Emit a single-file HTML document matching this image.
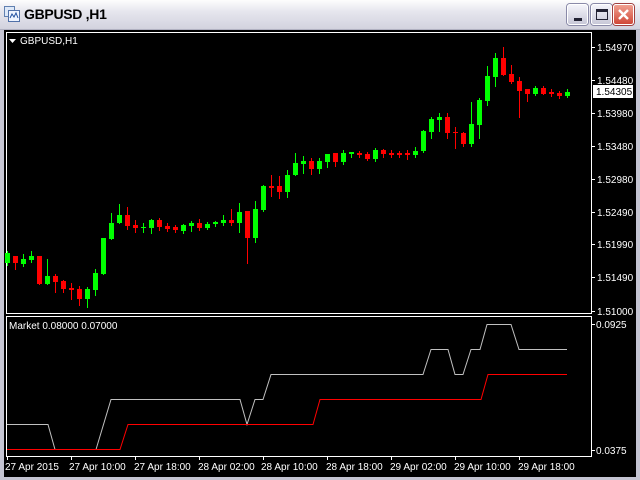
<!DOCTYPE html>
<html><head><meta charset="utf-8"><style>
*{margin:0;padding:0;box-sizing:border-box}
body{width:640px;height:480px;overflow:hidden;background:#c4c4d2;font-family:"Liberation Sans",sans-serif}
#title{position:absolute;left:0;top:0;width:640px;height:30px;background:linear-gradient(#fdfdfd,#e6e6ee 40%,#d2d2de);border-bottom:1px solid #b0b0c0}
#title .t{position:absolute;left:24px;top:6px;font-size:14px;font-weight:bold;color:#000;letter-spacing:-0.3px}
.btn{position:absolute;top:4px;width:21px;height:21px;border:1px solid #fff;border-radius:3px;background:linear-gradient(#f4f4fa,#c8c8d8);box-shadow:0 0 0 1px #8a8aa8}
#frame{position:absolute;left:4px;top:30px;width:632px;height:447px;background:#000}
</style></head><body>
<div id="title">
<svg style="position:absolute;left:4px;top:6px" width="16" height="16"><rect x="0.5" y="0.5" width="10" height="10" fill="#dde8f8" stroke="#6080b0"/><rect x="4.5" y="4.5" width="11" height="11" fill="#eef4ff" stroke="#5070a8"/><path d="M6 12l2-4 2 3 2-4 2 5" stroke="#2050a0" fill="none"/></svg>
<div class="t">GBPUSD ,H1</div>
<div class="btn" style="left:567px"><div style="position:absolute;left:6px;top:13px;width:8px;height:3px;background:#223"></div></div>
<div class="btn" style="left:591px"><div style="position:absolute;left:4px;top:4px;width:12px;height:11px;border:1px solid #223;border-top-width:3px"></div></div>
<div class="btn" style="left:613px;background:linear-gradient(#f0a090,#d04838);box-shadow:0 0 0 1px #a04040"><svg width="19" height="19" style="position:absolute;left:0;top:0"><path d="M5 5L14 14M14 5L5 14" stroke="#fff" stroke-width="2.4"/></svg></div>
</div>
<div id="frame"></div>
<svg id="s" width="640" height="480" style="position:absolute;left:0;top:0" font-family="Liberation Sans, sans-serif" font-size="10"></svg>
<script>
var C=[[253,263,251,265,'g'],[256,263,256,269,'r'],[259,264,254,266,'g'],[256,260,251,262,'g'],[256,284,256,284,'r'],[276,284,259,284,'g'],[276,282,274,292,'r'],[281,289,280,292,'r'],[288,290,283,299,'r'],[289,299,286,305,'r'],[289,299,287,307,'g'],[273,290,269,295,'g'],[238,274,238,274,'g'],[223,239,213,239,'g'],[215,223,204,223,'g'],[215,226,207,229,'r'],[225,228,220,232,'r'],[227,228,223,232,'g'],[220,228,219,233,'g'],[220,227,218,230,'r'],[226,229,223,231,'r'],[227,230,225,232,'r'],[225,231,224,233,'g'],[223,226,221,231,'g'],[223,228,219,230,'r'],[224,228,222,229,'g'],[222,224,221,226,'g'],[220,223,215,225,'g'],[220,223,209,225,'r'],[212,223,203,232,'g'],[211,238,211,263,'r'],[209,238,201,242,'g'],[186,210,185,211,'g'],[186,188,175,196,'r'],[186,192,176,198,'r'],[175,192,170,197,'g'],[163,175,153,175,'g'],[161,164,156,173,'g'],[161,169,158,174,'r'],[161,169,158,173,'g'],[154,162,154,167,'g'],[153,162,153,166,'r'],[153,162,150,164,'g'],[152,154,152,157,'g'],[153,155,151,157,'r'],[154,159,152,160,'r'],[150,159,148,161,'g'],[150,154,149,157,'r'],[153,155,150,157,'r'],[153,155,151,157,'r'],[153,155,150,159,'r'],[151,155,147,157,'g'],[131,151,130,152,'g'],[119,132,117,138,'g'],[117,120,113,131,'g'],[117,133,113,138,'r'],[132,133,127,148,'r'],[133,144,132,146,'r'],[124,144,102,146,'g'],[100,125,98,138,'g'],[76,101,66,105,'g'],[58,77,53,86,'g'],[58,75,47,75,'r'],[74,82,65,83,'r'],[81,91,77,117,'r'],[89,94,89,101,'r'],[88,94,86,95,'g'],[88,94,86,94,'r'],[92,94,89,96,'r'],[93,96,91,98,'r'],[92,96,89,97,'g']];
var h='<rect x="6.5" y="32.5" width="585" height="281" fill="none" stroke="#fff"/><rect x="6.5" y="316.5" width="585" height="140" fill="none" stroke="#fff"/>';
h+='<path d="M9 39h7l-3.5 4z" fill="#fff"/><text x="20" y="44" fill="#fff" font-size="10">GBPUSD,H1</text><text x="9" y="329" fill="#fff">Market 0.08000 0.07000</text>';
C.forEach(function(c,i){var x=7+i*8,col=c[4]=='g'?'#00ff00':'#ff0000';h+='<rect x="'+x+'" y="'+c[2]+'" width="1" height="'+(c[3]-c[2]+1)+'" fill="'+col+'"/>';var bh=c[1]-c[0];if(bh<2)bh=1;h+='<rect x="'+(x-2)+'" y="'+c[0]+'" width="5" height="'+bh+'" fill="'+col+'"/>';});
[["1.54970",47],["1.54480",80],["1.53980",113],["1.53480",146],["1.52980",179],["1.52490",212],["1.51990",244],["1.51490",277],["1.51000",311]].forEach(function(p){h+='<rect x="592" y="'+p[1]+'" width="3" height="1" fill="#fff"/><text x="597" y="'+(p[1]+4)+'" fill="#fff">'+p[0]+'</text>'});
h+='<rect x="593" y="85" width="40" height="13" fill="#fff"/><text x="596" y="95" fill="#000">1.54305</text>';
h+='<rect x="592" y="324" width="3" height="1" fill="#fff"/><text x="596" y="328" fill="#fff">0.0925</text><rect x="592" y="450" width="3" height="1" fill="#fff"/><text x="596" y="454" fill="#fff">0.0375</text>';
h+='<polyline fill="none" stroke="#c0c0c0" points="7,424.5 48,424.5 55,449.5 96,449.5 111,399.5 240,399.5 247,424.5 255,399.5 263,399.5 271,374.5 423,374.5 431,349.5 448,349.5 455,374.5 463,374.5 471,349.5 480,349.5 487,324.5 511,324.5 519,349.5 567,349.5"/>';
h+='<polyline fill="none" stroke="#ff0000" points="7,449.5 120,449.5 128,424.5 313,424.5 320,399.5 481,399.5 488,374.5 567,374.5"/>';
[["27 Apr 2015",5,7],["27 Apr 10:00",69,71],["27 Apr 18:00",134,135],["28 Apr 02:00",198,199],["28 Apr 10:00",261,263],["28 Apr 18:00",326,327],["29 Apr 02:00",390,391],["29 Apr 10:00",454,455],["29 Apr 18:00",518,519]].forEach(function(t){h+='<rect x="'+t[2]+'" y="456" width="1" height="4" fill="#fff"/><text x="'+t[1]+'" y="470" fill="#fff">'+t[0]+'</text>'});
document.getElementById('s').innerHTML=h;
</script>
</body></html>
